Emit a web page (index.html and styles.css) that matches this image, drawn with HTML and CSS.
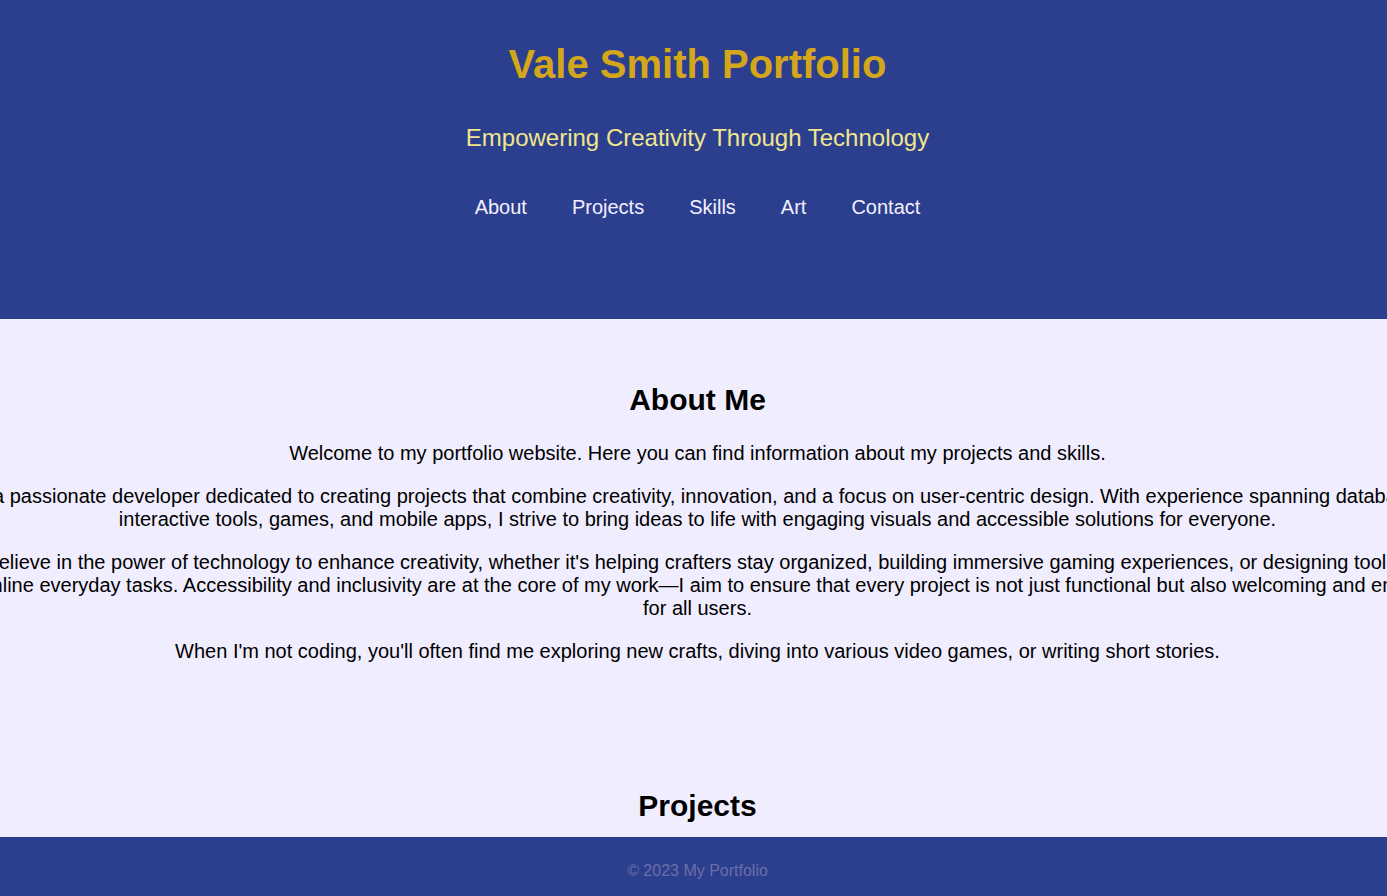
FILE: index.html
```html
<!DOCTYPE html>
<html lang="en">
<head>
<meta charset="utf-8">
<title>Vale Smith Portfolio</title>
<link rel="stylesheet" href="styles.css">
</head>
<body>
<header class="site-header">
  <h1 class="site-title">Vale Smith Portfolio</h1>
  <p class="tagline">Empowering Creativity Through Technology</p>
  <nav class="main-nav">
    <a href="#about">About</a>
    <a href="#projects">Projects</a>
    <a href="#skills">Skills</a>
    <a href="#art">Art</a>
    <a href="#contact">Contact</a>
  </nav>
</header>
<main>
  <section class="section" id="about">
    <h2 class="section-title">About Me</h2>
    <div class="about-text">
      <p>Welcome to my portfolio website. Here you can find information about my projects and skills.</p>
      <p>I'm a passionate developer dedicated to creating projects that combine creativity, innovation, and a focus on user-centric design. With experience spanning databases, interactive tools, games, and mobile apps, I strive to bring ideas to life with engaging visuals and accessible solutions for everyone.</p>
      <p>I believe in the power of technology to enhance creativity, whether it's helping crafters stay organized, building immersive gaming experiences, or designing tools to streamline everyday tasks. Accessibility and inclusivity are at the core of my work—I aim to ensure that every project is not just functional but also welcoming and engaging for all users.</p>
      <p>When I'm not coding, you'll often find me exploring new crafts, diving into various video games, or writing short stories.</p>
    </div>
  </section>
  <section class="section" id="projects">
    <h2 class="section-title">Projects</h2>
    <div class="about-text">
      <p>Craft Organizer — a database tool that helps crafters keep track of supplies and patterns.</p>
      <p>Pixel Quest — a small adventure game built with accessibility options from the start.</p>
    </div>
  </section>
</main>
<footer class="site-footer">
  <p>© 2023 My Portfolio</p>
</footer>
</body>
</html>
```
FILE: styles.css
```css
html, body {
  margin: 0;
  padding: 0;
}

body {
  font-family: "Liberation Sans", Arial, sans-serif;
  font-size: 20px;
  background: #f0edff;
  color: #000;
  overflow-x: hidden;
}

.site-header {
  background: #2c3e8e;
  text-align: center;
  padding: 41px 0 100px 8px;
}

.site-title {
  margin: 0;
  font-size: 40px;
  line-height: 46px;
  font-weight: bold;
  color: #d4a61a;
}

.tagline {
  margin: 37px 0 0;
  font-size: 24px;
  line-height: 28px;
  color: #f0e68c;
}

.main-nav {
  margin-top: 44px;
  display: flex;
  justify-content: center;
  gap: 45px;
  font-size: 20px;
  line-height: 23px;
}

.main-nav a {
  color: #f2f0ff;
  text-decoration: none;
}

.section {
  display: flex;
  flex-direction: column;
  align-items: center;
  padding: 63px 0 62px 8px;
}

.section-title {
  margin: 0 0 25px;
  font-size: 30px;
  line-height: 35px;
  font-weight: bold;
}

.about-text {
  width: 1520px;
  flex-shrink: 0;
  text-align: center;
  display: flex;
  flex-direction: column;
  gap: 20px;
}

.about-text p {
  margin: 0;
  line-height: 23px;
}

.site-footer {
  position: fixed;
  left: 0;
  right: 0;
  bottom: 0;
  height: 59px;
  box-sizing: border-box;
  padding: 25px 0 0 8px;
  background: #2c3e8e;
  text-align: center;
}

.site-footer p {
  margin: 0;
  font-size: 16px;
  line-height: 18px;
  color: #6a6fa8;
}
```
